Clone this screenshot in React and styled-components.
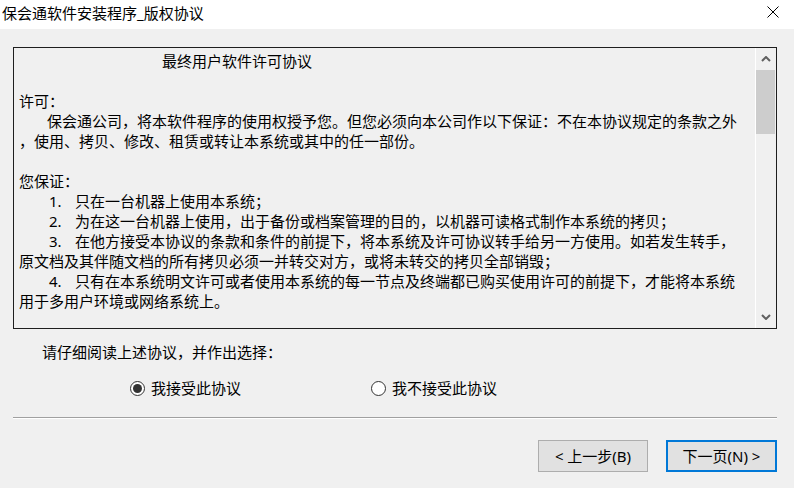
import React from 'react';
import styled, { createGlobalStyle } from 'styled-components';

const GlobalStyle = createGlobalStyle`
  html, body {
    margin: 0;
    padding: 0;
    background: #f0f0f0;
  }
  body {
    font-family: "Noto Sans", "Noto Sans CJK SC", sans-serif;
    font-size: 15px;
    color: #000;
  }
`;

const Window = styled.div`
  width: 794px;
  height: 488px;
  background: #f0f0f0;
  overflow: hidden;
  display: flex;
  flex-direction: column;
`;

const TitleBar = styled.div`
  height: 29px;
  background: #fff;
  display: flex;
  align-items: center;
  justify-content: space-between;
  padding-left: 2px;
  flex-shrink: 0;
`;

const Title = styled.span`
  font-size: 15px;
  line-height: 20px;
  margin-top: -3px;
`;

const CloseButton = styled.div`
  width: 46px;
  height: 29px;
  display: flex;
  align-items: center;
  justify-content: center;
  margin-right: -2px;
  svg {
    margin-top: -5px;
  }
`;

const Body = styled.div`
  padding: 18px 17px 0 13px;
  display: flex;
  flex-direction: column;
`;

const LicenseBox = styled.div`
  height: 282px;
  border: 1px solid #1e1e1e;
  box-sizing: border-box;
  display: flex;
`;

const LicenseText = styled.div`
  flex: 1;
  overflow: hidden;
  padding: 3px 5px 0 5px;
  line-height: 20px;
  white-space: nowrap;
`;

const Line = styled.div`
  height: 20px;
  padding-left: ${(p) => p.$indent || 0}px;
`;

const Item = styled.div`
  height: 20px;
  padding-left: 28px;
  display: flex;
`;

const Num = styled.span`
  width: 28px;
  padding-left: 2px;
  box-sizing: border-box;
  flex-shrink: 0;
`;

const ScrollBar = styled.div`
  width: 20px;
  border-left: 1px solid #fff;
  display: flex;
  flex-direction: column;
`;

const ScrollArrow = styled.div`
  height: 22px;
  display: flex;
  align-items: center;
  justify-content: center;
  flex-shrink: 0;
`;

const ScrollTrack = styled.div`
  flex: 1;
`;

const Thumb = styled.div`
  height: 64px;
  margin: 0 1px 0 0;
  background: #cdcdcd;
`;

const Prompt = styled.div`
  margin-top: 13px;
  padding-left: 29px;
  line-height: 20px;
`;

const RadioGroup = styled.div`
  display: flex;
  margin-top: 16px;
  padding-left: 117px;
`;

const RadioOption = styled.label`
  display: flex;
  align-items: center;
  width: ${(p) => p.$width || 'auto'};
  line-height: 20px;
  gap: 6px;
`;

const RadioCircle = styled.span`
  width: 15px;
  height: 15px;
  box-sizing: border-box;
  border-radius: 50%;
  border: 1px solid #333;
  background: #fff;
  display: flex;
  align-items: center;
  justify-content: center;
  &::after {
    content: '';
    display: ${(p) => (p.$checked ? 'block' : 'none')};
    width: 9px;
    height: 9px;
    border-radius: 50%;
    background: #333;
  }
`;

const Separator = styled.div`
  margin-top: 19px;
  border-top: 1px solid #a0a0a0;
  border-bottom: 1px solid #fff;
`;

const ButtonRow = styled.div`
  display: flex;
  justify-content: flex-end;
  gap: 18px;
  margin-top: 21px;
`;

const Button = styled.button`
  width: ${(p) => (p.$primary ? '111px' : '110px')};
  height: 32px;
  box-sizing: border-box;
  background: #e1e1e1;
  border: ${(p) => (p.$primary ? '2px solid #0078d7' : '1px solid #adadad')};
  font-family: inherit;
  font-size: 15px;
  color: #000;
  padding: 0;
  line-height: 20px;
`;

const Chevron = ({ up }) => (
  <svg width="10" height="6" viewBox="0 0 10 6">
    <polyline
      points={up ? '1,5 5,1 9,5' : '1,1 5,5 9,1'}
      fill="none"
      stroke="#606060"
      strokeWidth="2"
    />
  </svg>
);

const App = () => (
  <>
    <GlobalStyle />
    <Window>
      <TitleBar>
        <Title>保会通软件安装程序_版权协议</Title>
        <CloseButton>
          <svg width="12" height="12" viewBox="0 0 12 12">
            <path d="M0.5 0.5 L11.5 11.5 M11.5 0.5 L0.5 11.5" stroke="#000" strokeWidth="1" />
          </svg>
        </CloseButton>
      </TitleBar>
      <Body>
        <LicenseBox>
          <LicenseText>
            <Line $indent={143}>最终用户软件许可协议</Line>
            <Line />
            <Line>许可：</Line>
            <Line $indent={28}>保会通公司，将本软件程序的使用权授予您。但您必须向本公司作以下保证：不在本协议规定的条款之外</Line>
            <Line>，使用、拷贝、修改、租赁或转让本系统或其中的任一部份。</Line>
            <Line />
            <Line>您保证：</Line>
            <Item><Num>1.</Num>只在一台机器上使用本系统；</Item>
            <Item><Num>2.</Num>为在这一台机器上使用，出于备份或档案管理的目的，以机器可读格式制作本系统的拷贝；</Item>
            <Item><Num>3.</Num>在他方接受本协议的条款和条件的前提下，将本系统及许可协议转手给另一方使用。如若发生转手，</Item>
            <Line>原文档及其伴随文档的所有拷贝必须一并转交对方，或将未转交的拷贝全部销毁；</Line>
            <Item><Num>4.</Num>只有在本系统明文许可或者使用本系统的每一节点及终端都已购买使用许可的前提下，才能将本系统</Item>
            <Line>用于多用户环境或网络系统上。</Line>
          </LicenseText>
          <ScrollBar>
            <ScrollArrow><Chevron up /></ScrollArrow>
            <ScrollTrack><Thumb /></ScrollTrack>
            <ScrollArrow><Chevron /></ScrollArrow>
          </ScrollBar>
        </LicenseBox>
        <Prompt>请仔细阅读上述协议，并作出选择：</Prompt>
        <RadioGroup>
          <RadioOption $width="241px">
            <RadioCircle $checked />
            我接受此协议
          </RadioOption>
          <RadioOption>
            <RadioCircle />
            我不接受此协议
          </RadioOption>
        </RadioGroup>
        <Separator />
        <ButtonRow>
          <Button>&lt; 上一步(B)</Button>
          <Button $primary>下一页(N) &gt;</Button>
        </ButtonRow>
      </Body>
    </Window>
  </>
);

export default App;
